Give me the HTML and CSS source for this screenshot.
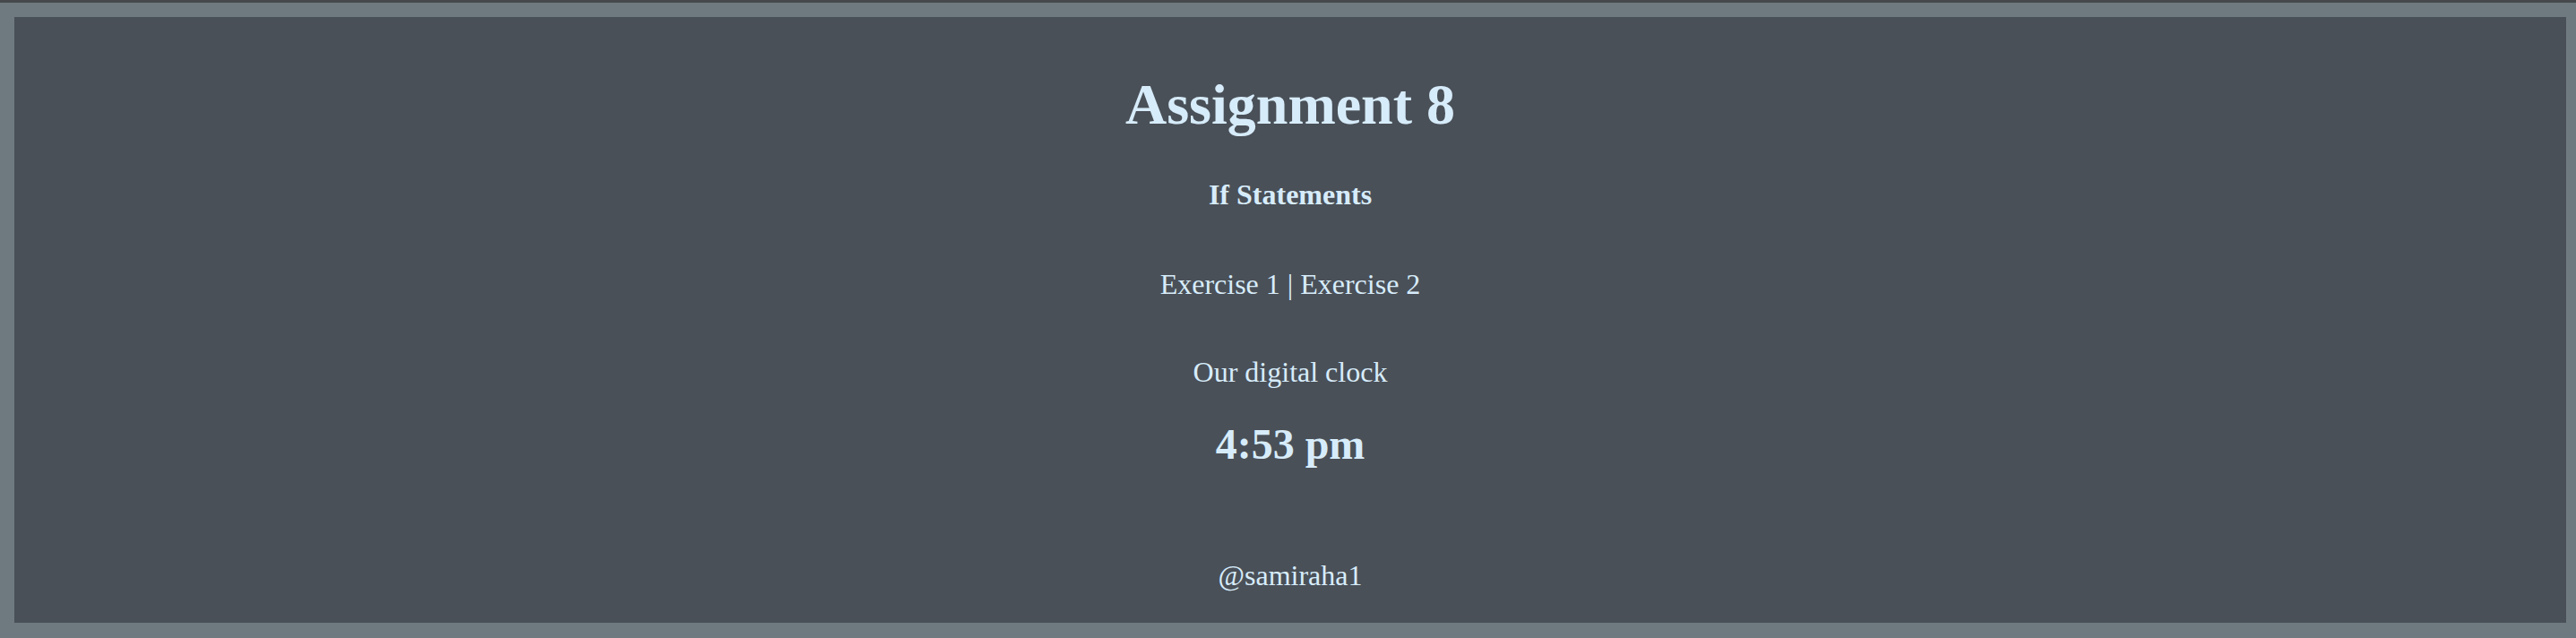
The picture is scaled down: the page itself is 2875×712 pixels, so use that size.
FILE: index.html
```html
<!DOCTYPE html>
<html lang="en">
<head>
<meta charset="utf-8">
<title>Assignment 8</title>
<link rel="stylesheet" href="styles.css">
</head>
<body>
<main class="panel">
  <h1 class="title">Assignment 8</h1>
  <h4 class="subtitle">If Statements</h4>
  <p class="links">Exercise 1 | Exercise 2</p>
  <p class="label">Our digital clock</p>
  <h2 class="clock">4:53 pm</h2>
  <p class="handle">@samiraha1</p>
</main>
</body>
</html>
```

FILE: styles.css
```css
html {
  background: #6f7a80;
  border-top: 3px solid #45494c;
}

body {
  margin: 16px 11px 18px 16px;
  font-family: "Liberation Serif", "Times New Roman", serif;
  color: #d7ecfa;
}

.panel {
  background: #4a5058;
  text-align: center;
  padding: 61px 0 34px;
  display: flex;
  flex-direction: column;
  align-items: center;
}

.panel > * {
  margin: 0;
  line-height: normal;
}

.title {
  font-size: 64px;
  font-weight: bold;
}

.subtitle {
  font-size: 32px;
  font-weight: bold;
  margin-top: 45px;
}

.links {
  font-size: 32px;
  margin-top: 63px;
}

.label {
  font-size: 32px;
  margin-top: 61px;
}

.clock {
  font-size: 48px;
  font-weight: bold;
  margin-top: 34px;
}

.handle {
  font-size: 32px;
  margin-top: 101px;
}
```
